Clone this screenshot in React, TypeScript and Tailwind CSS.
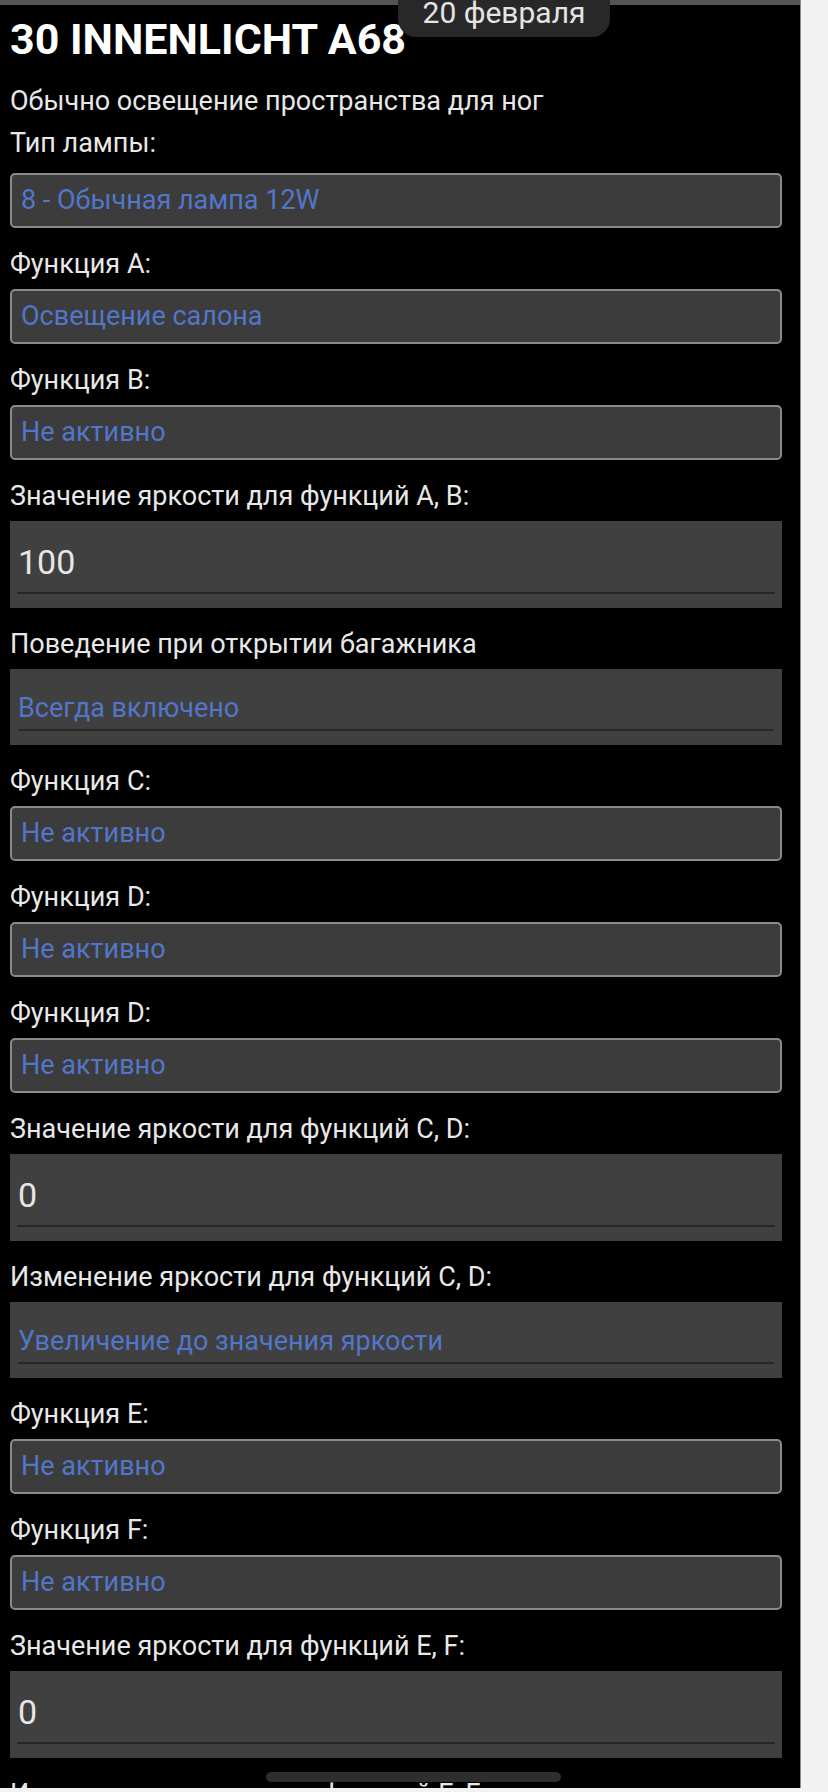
import React from "react"

const font = "font-['Roboto','Noto_Sans',sans-serif]"

type Item =
  | { kind: "spinner"; label: string; value: string }
  | { kind: "input"; label: string; value: string }
  | { kind: "filled"; label: string; value: string }

const items: Item[] = [
  { kind: "spinner", label: "Функция A:", value: "Освещение салона" },
  { kind: "spinner", label: "Функция B:", value: "Не активно" },
  { kind: "input", label: "Значение яркости для функций A, B:", value: "100" },
  { kind: "filled", label: "Поведение при открытии багажника", value: "Всегда включено" },
  { kind: "spinner", label: "Функция C:", value: "Не активно" },
  { kind: "spinner", label: "Функция D:", value: "Не активно" },
  { kind: "spinner", label: "Функция D:", value: "Не активно" },
  { kind: "input", label: "Значение яркости для функций C, D:", value: "0" },
  { kind: "filled", label: "Изменение яркости для функций C, D:", value: "Увеличение до значения яркости" },
  { kind: "spinner", label: "Функция E:", value: "Не активно" },
  { kind: "spinner", label: "Функция F:", value: "Не активно" },
  { kind: "input", label: "Значение яркости для функций E, F:", value: "0" },
]

function Label({ text, className = "" }: { text: string; className?: string }) {
  return (
    <div className={`text-[27px] leading-[32px] h-[32px] text-[#e8e8e8] whitespace-nowrap ${className}`}>
      {text}
    </div>
  )
}

function Spinner({ value, className = "" }: { value: string; className?: string }) {
  return (
    <div
      className={`h-[55px] border-2 border-[#8a8a8a] rounded-[5px] bg-[#3c3c3c] flex items-center pl-[9px] text-[27px] text-[#5276c9] whitespace-nowrap ${className}`}
    >
      {value}
    </div>
  )
}

function TextInput({ value }: { value: string }) {
  return (
    <div className="mt-[9px] h-[87px] bg-[#404040] px-[7px] flex flex-col">
      <div className="pt-[20px] pl-[1px] text-[34px] leading-[42px] text-[#e6e6e6]">{value}</div>
      <div className="mt-auto mb-[14px] h-[2px] bg-[#262626]" />
    </div>
  )
}

function FilledSelect({ value }: { value: string }) {
  return (
    <div className="mt-[9px] h-[76px] bg-[#404040] px-[8px] flex flex-col">
      <div className="pt-[23px] text-[27px] leading-[32px] text-[#5276c9] whitespace-nowrap">{value}</div>
      <div className="mt-auto mb-[14px] h-[2px] bg-[#262626]" />
    </div>
  )
}

export default function App() {
  return (
    <div className={`relative w-[828px] h-[1792px] bg-[#f2f2f2] overflow-hidden ${font}`}>
      <div className="relative w-[801px] h-[1788px] bg-black border-r border-[#8c8c8c] overflow-hidden">
        <div className="h-[5px] bg-[#555555]" />

        <div className="px-[10px] w-[792px]">
          <div className="mt-[10px] text-[43px] leading-[48px] font-bold text-white whitespace-nowrap">
            30 INNENLICHT A68
          </div>
          <Label text="Обычно освещение пространства для ног" className="mt-[22px]" />
          <Label text="Тип лампы:" className="mt-[10px]" />
          <Spinner value="8 - Обычная лампа 12W" className="mt-[14px]" />

          {items.map((item, i) => (
            <div key={i}>
              <Label text={item.label} className="mt-[20px]" />
              {item.kind === "spinner" && <Spinner value={item.value} className="mt-[9px]" />}
              {item.kind === "input" && <TextInput value={item.value} />}
              {item.kind === "filled" && <FilledSelect value={item.value} />}
            </div>
          ))}

          <Label text="Изменение яркости для функций E, F:" className="mt-[20px]" />
        </div>

        {/* date toast over the title */}
        <div className="absolute left-[398px] top-0 w-[212px] h-[37px] rounded-b-[18px] bg-[#282828] flex justify-center">
          <span className="-mt-[2px] text-[30px] leading-[30px] text-[#e4e4e4]">20 февраля</span>
        </div>

        {/* scroll indicator */}
        <div className="absolute left-[266px] top-[1772px] w-[295px] h-[10px] rounded-full bg-[#2e2e2e]" />
      </div>
    </div>
  )
}
